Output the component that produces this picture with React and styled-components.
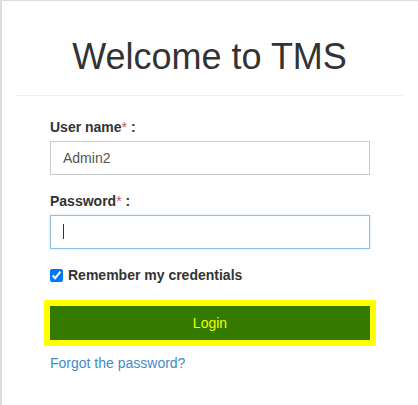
import React from 'react'
import styled, { createGlobalStyle } from 'styled-components'

const GlobalStyle = createGlobalStyle`
    html, body {
        margin: 0;
        padding: 0;
        background: #fff;
    }
    body {
        font-family: "Liberation Sans", Arial, Helvetica, sans-serif;
        font-size: 14px;
        line-height: 20px;
        color: #333;
        overflow: hidden;
    }
    * {
        box-sizing: border-box;
    }
`

function App() {
    return (
        <>
            <GlobalStyle />
            <Panel>
                <Header>
                    <Title>Welcome to TMS</Title>
                    <Divider />
                </Header>
                <Form onSubmit={(e) => e.preventDefault()}>
                    <Group>
                        <Label htmlFor="username">
                            User name<Star>*</Star> :
                        </Label>
                        <Input id="username" type="text" defaultValue="Admin2" />
                    </Group>
                    <Group>
                        <Label htmlFor="password">
                            Password<Star>*</Star> :
                        </Label>
                        <InputWrap>
                            <Input id="password" type="password" $focused />
                            <Caret />
                        </InputWrap>
                    </Group>
                    <CheckRow>
                        <Check type="checkbox" defaultChecked />
                        Remember my credentials
                    </CheckRow>
                    <LoginButton type="submit">Login</LoginButton>
                    <ForgotLink href="#">Forgot the password?</ForgotLink>
                </Form>
            </Panel>
        </>
    )
}

export default App

const Panel = styled.div`
    width: 420px;
    height: 405px;
    border-top: 1px solid #ddd;
    border-left: 2px solid #ddd;
`

const Header = styled.div`
    width: 387px;
    margin-left: 14px;
    padding-top: 36px;
`

const Title = styled.h1`
    margin: 0;
    font-size: 36px;
    font-weight: 400;
    line-height: 40px;
    text-align: center;
    color: #333;
`

const Divider = styled.div`
    height: 1px;
    margin-top: 18px;
    background: #eee;
`

const Form = styled.form`
    width: 320px;
    margin-left: 48px;
    padding-top: 21px;
    display: flex;
    flex-direction: column;
`

const Group = styled.div`
    display: flex;
    flex-direction: column;
    margin-bottom: 16px;
`

const Label = styled.label`
    font-weight: 700;
    margin-bottom: 4px;
`

const Star = styled.span`
    color: #c8525a;
    font-weight: 400;
`

const InputWrap = styled.div`
    position: relative;
`

const Input = styled.input`
    width: 320px;
    height: 34px;
    padding: 6px 12px;
    font-family: inherit;
    font-size: 14px;
    color: #555;
    background: #fff;
    border: 1px solid ${(p) => (p.$focused ? '#8fbde6' : '#ccc')};
    border-radius: 0;
    box-shadow: ${(p) => (p.$focused ? '0 0 3px rgba(102, 175, 233, 0.35)' : 'none')};
    outline: none;
    display: block;
`

const Caret = styled.span`
    position: absolute;
    left: 13px;
    top: 9px;
    width: 1px;
    height: 15px;
    background: #333;
`

const CheckRow = styled.label`
    display: flex;
    align-items: center;
    gap: 5px;
    font-weight: 700;
    height: 20px;
    margin-bottom: 21px;
`

const Check = styled.input`
    margin: 0;
    width: 13px;
    height: 13px;
`

const LoginButton = styled.button`
    width: 320px;
    height: 34px;
    background: #357a00;
    color: #eeff00;
    font-family: inherit;
    font-size: 14px;
    border: none;
    border-radius: 0;
    outline: 6px solid #ff0;
    cursor: pointer;
`

const ForgotLink = styled.a`
    margin-top: 13px;
    color: #428bca;
    text-decoration: none;
    align-self: flex-start;
`
